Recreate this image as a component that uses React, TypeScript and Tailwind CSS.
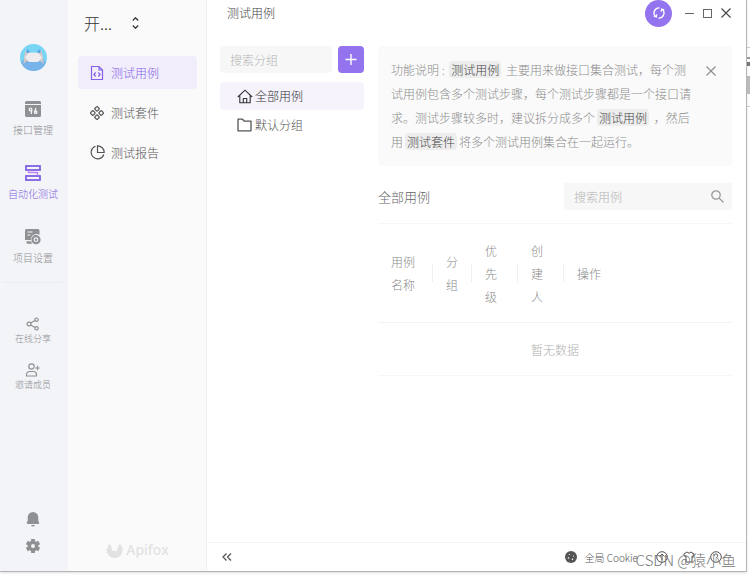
import type { ReactNode } from 'react'

const railItems = [
  { label: '接口管理', icon: <ApiIcon /> },
  { label: '自动化测试', icon: <AutomationIcon />, active: true },
  { label: '项目设置', icon: <ProjectSettingsIcon /> },
]

const menuItems = [
  { label: '测试用例', icon: <CaseIcon />, active: true },
  { label: '测试套件', icon: <SuiteIcon /> },
  { label: '测试报告', icon: <ReportIcon /> },
]

const columns = [
  { label: '用例名称', width: 'w-[55px]' },
  { label: '分组', width: 'w-[39px]' },
  { label: '优先级', width: 'w-[46px]' },
  { label: '创建人', width: 'w-[46px]' },
  { label: '操作', width: '' },
]

function ApiIcon() {
  return (
    <svg width="16" height="16" viewBox="0 0 16 16" fill="none">
      <path d="M1.5 0h13A1.5 1.5 0 0 1 16 1.5V3H0V1.5A1.5 1.5 0 0 1 1.5 0Z" fill="currentColor" />
      <path d="M0 4h16v10.500a1.500 1.500 0 0 1-1.500 1.500h-13A1.500 1.500 0 0 1 0 14.500Z" fill="currentColor" />
      <g stroke="#f3f4f6" strokeWidth="1.300">
        <circle cx="5.500" cy="8.500" r="1.300" />
        <path d="M6.800 8.500 6.300 13M10.800 6.800 9.700 11.500" />
        <circle cx="10.700" cy="11.200" r="1.200" />
      </g>
    </svg>
  )
}

function AutomationIcon() {
  return (
    <svg width="16" height="16" viewBox="0 0 16 16" fill="none" stroke="currentColor">
      <rect x="1" y="1" width="14" height="4" strokeWidth="1.800" />
      <rect x="1" y="11" width="14" height="4" strokeWidth="1.800" />
      <path d="M3.500 5.500v2h9v3" strokeWidth="1.400" stroke="#c084f5" />
    </svg>
  )
}

function ProjectSettingsIcon() {
  return (
    <svg width="16" height="16" viewBox="0 0 16 16" fill="none">
      <path d="M1.500 0h11.500A1.500 1.500 0 0 1 14.500 1.500V6A5.500 5.500 0 0 0 6 11H0V1.500A1.500 1.500 0 0 1 1.500 0Z" fill="currentColor" />
      <path d="M1.500 12.200H6q.4 1.500 1.300 2.600H3A1.500 1.500 0 0 1 1.500 13.300Z" fill="currentColor" />
      <path d="M2.500 3h5M2.500 6h3" stroke="#f3f4f6" strokeWidth="1.200" />
      <circle cx="11" cy="10.700" r="3.500" stroke="currentColor" strokeWidth="2.200" />
      <circle cx="11" cy="10.700" r="1.200" fill="currentColor" />
    </svg>
  )
}

function CaseIcon() {
  return (
    <svg width="14" height="16" viewBox="0 0 14 16" fill="none" stroke="currentColor" strokeWidth="1.200">
      <path d="M1.500 1.500h7.500l3.500 3.500v9.500h-11ZM9 1.500V5h3.500" />
      <path d="M5.700 7.500 3.900 9.500l1.800 2M8.300 7.500l1.800 2-1.800 2" />
    </svg>
  )
}

function SuiteIcon() {
  return (
    <svg width="14" height="14" viewBox="0 0 14 14" fill="none" stroke="currentColor" strokeWidth="1.200">
      <rect x="5.200" y="1" width="3.600" height="3.600" rx=".8" transform="rotate(45 7 2.800)" />
      <rect x="5.200" y="9.400" width="3.600" height="3.600" rx=".8" transform="rotate(45 7 11.200)" />
      <rect x="1" y="5.200" width="3.600" height="3.600" rx=".8" transform="rotate(45 2.800 7)" />
      <rect x="9.400" y="5.200" width="3.600" height="3.600" rx=".8" transform="rotate(45 11.200 7)" />
    </svg>
  )
}

function ReportIcon() {
  return (
    <svg width="15" height="15" viewBox="0 0 15 15" fill="none" stroke="currentColor" strokeWidth="1.200">
      <path d="M5.500 1.200A6.500 6.500 0 1 0 13.800 9.500" />
      <path d="M7.500.8v6.700h6.700A6.700 6.700 0 0 0 7.500.8Z" />
    </svg>
  )
}

function Avatar() {
  return (
    <svg width="27" height="27" viewBox="0 0 27 27" aria-label="avatar">
      <circle cx="13.500" cy="13.500" r="13.500" fill="#78d5f3" />
      <path d="M1 18.500 6 13h15l5 5.500A13.500 13.500 0 0 1 1 18.500Z" fill="#78b3ea" />
      <path d="M7 5 11 8.500l-5 2ZM20 5 16 8.500l5 2Z" fill="#5aa5e3" />
      <path d="M5.500 5.500 6.500 9h14l1-3.500 1.200 7 .8 7.500-3-3H6.500l-3 3 .8-7.500Z" fill="#d3c9c8" />
      <path d="M9 8.500h9l4 5-4 4.500H9l-4-4.500Z" fill="#eeecef" />
    </svg>
  )
}

function ShareIcon() {
  return (
    <svg width="14" height="14" viewBox="0 0 14 14" fill="none" stroke="currentColor" strokeWidth="1.200">
      <circle cx="3" cy="7" r="1.900" />
      <circle cx="10.500" cy="2.700" r="1.700" />
      <circle cx="10.500" cy="11.300" r="1.700" />
      <path d="M4.600 6 9 3.500M4.600 8 9 10.500" />
    </svg>
  )
}

function InviteIcon() {
  return (
    <svg width="16" height="14" viewBox="0 0 16 14" fill="none" stroke="currentColor" strokeWidth="1.200">
      <circle cx="6.500" cy="3.500" r="2.700" />
      <path d="M1.500 13v-1.500a3 3 0 0 1 3-3h4a3 3 0 0 1 3 3V13ZM12.500 2.800v4.400M10.300 5h4.400" />
    </svg>
  )
}

function BellIcon() {
  return (
    <svg width="14" height="15" viewBox="0 0 14 15" fill="currentColor">
      <path d="M7 0a5.300 5.300 0 0 1 5.300 5.300V8.500l.9 2.300q.2 1.200-1 1.200H1.800q-1.200 0-1-1.200l.9-2.300V5.300A5.300 5.300 0 0 1 7 0ZM5 13h4q-.6 1.600-2 1.600T5 13Z" />
    </svg>
  )
}

function GearIcon() {
  return (
    <svg width="14" height="14" viewBox="0 0 14 14" fill="none" stroke="currentColor">
      <circle cx="7" cy="7" r="3.700" strokeWidth="3.400" />
      <path d="M7 0v3M7 11v3M.9 3.500 3.500 5M10.500 9l2.600 1.500M.9 10.500 3.500 9M10.500 5l2.600-1.500" strokeWidth="3.800" />
    </svg>
  )
}

function ApifoxLogo() {
  return (
    <svg width="17" height="15" viewBox="0 0 17 15" fill="currentColor">
      <path d="M4 .8 5.600 4.500Q5 8.300 8.600 8.300q3.400 0 3-3.800L13.800.8Q16.700 3 16.600 7.200A8 7.600 0 0 1 8.700 15Q4 15 2.500 11.500L.3 9.500 1.300 8 0 6.500l1.500-1Q2 2 4 .8Z" />
    </svg>
  )
}

function HomeIcon() {
  return (
    <svg width="16" height="15" viewBox="0 0 16 15" fill="none" stroke="currentColor" strokeWidth="1.100">
      <path d="M.8 8 8 1.200 15.200 8M2.800 6.500v7.300h10.400V6.500M6.300 13.800V9.500h3.400v4.300" />
    </svg>
  )
}

function FolderIcon() {
  return (
    <svg width="15" height="14" viewBox="0 0 15 14" fill="none" stroke="currentColor" strokeWidth="1.300">
      <path d="M1 1.200h4.500l1.800 2H14v9.600H1Z" strokeLinejoin="round" />
    </svg>
  )
}

function SyncIcon() {
  return (
    <svg width="12" height="12" viewBox="0 0 12 12" fill="none" stroke="currentColor" strokeWidth="1.300">
      <path d="M6.500 1A5 5 0 0 0 2.500 9.500M3.800 7.300 3.300 10 .8 9.200M5.500 11A5 5 0 0 0 9.500 2.500M8.200 4.700 8.700 2l2.500.8" />
    </svg>
  )
}

function CrossIcon() {
  return (
    <svg width="10" height="10" viewBox="0 0 10 10" stroke="currentColor" strokeWidth="1.100">
      <path d="M.5.5l9 9M9.500.5l-9 9" />
    </svg>
  )
}

function SearchIcon() {
  return (
    <svg width="13" height="13" viewBox="0 0 13 13" fill="none" stroke="currentColor" strokeWidth="1.300">
      <circle cx="5" cy="5" r="4.200" />
      <path d="m8 8 4.500 4.500" />
    </svg>
  )
}

function CookieIcon() {
  return (
    <svg width="12" height="12" viewBox="0 0 12 12" fill="#555">
      <circle cx="6" cy="6" r="6" />
      <g fill="#fff">
        <circle cx="4.500" cy="3.500" r=".6" />
        <circle cx="8.500" cy="5" r=".6" />
        <circle cx="3.500" cy="7" r=".8" />
        <circle cx="7.500" cy="8.300" r=".8" />
      </g>
    </svg>
  )
}

function Tag({ children }: { children: ReactNode }) {
  return <span className="mx-0.5 rounded-sm bg-[#ededed] px-0.5 text-[#444]">{children}</span>
}

function Rail() {
  return (
    <nav className="flex w-[68px] shrink-0 flex-col items-center bg-[#f3f4f7] pt-11 pr-0.5 pb-[18px] text-[#8f9093]">
      <Avatar />
      <div className="mt-[30px] flex flex-col gap-[27px]">
        {railItems.map((item) => (
          <button
            key={item.label}
            className={`flex flex-col items-center gap-[5px] text-[10px] leading-4 ${item.active ? 'text-[#7f62e2]' : ''}`}
          >
            {item.icon}
            {item.label}
          </button>
        ))}
      </div>
      <hr className="mt-4 w-[60px] border-[#ececef]" />
      <div className="mt-[34px] flex flex-col gap-[17px] text-[9px] leading-[15px]">
        <button className="flex flex-col items-center">
          <ShareIcon />
          在线分享
        </button>
        <button className="flex flex-col items-center">
          <InviteIcon />
          邀请成员
        </button>
      </div>
      <div className="mt-auto flex flex-col items-center gap-3">
        <button aria-label="通知">
          <BellIcon />
        </button>
        <button aria-label="设置">
          <GearIcon />
        </button>
      </div>
    </nav>
  )
}

function Sidebar() {
  return (
    <aside className="flex w-[139px] shrink-0 flex-col border-r border-[#f0f0f0] bg-[#fafafa] pt-3 pr-[9px] pb-3 pl-2.5">
      <button className="flex items-center gap-5 pl-1.5 text-base leading-[22px] text-[#333]">
        开...
        <svg width="7" height="12" viewBox="0 0 7 12" fill="none" stroke="currentColor" strokeWidth="1.300">
          <path d="m.8 3.500 2.700-2.700 2.700 2.700M.8 8.500l2.700 2.700 2.700-2.700" />
        </svg>
      </button>
      <div className="mt-[22px] flex flex-col gap-[7px]">
        {menuItems.map((item) => (
          <button
            key={item.label}
            className={`flex h-[33px] items-center rounded pl-3 text-xs ${item.active ? 'bg-[#f1edfa] text-[#8561ea]' : 'text-[#555]'}`}
          >
            <span className="flex w-[21px]">{item.icon}</span>
            {item.label}
          </button>
        ))}
      </div>
      <div className="mt-auto flex items-center justify-center gap-[3px] font-['Noto_Sans'] text-sm leading-[18px] font-medium text-[#e2e2e2]">
        <ApifoxLogo />
        Apifox
      </div>
    </aside>
  )
}

function TitleBar() {
  return (
    <header className="flex h-[26px] shrink-0 items-center pr-[15px] pl-5 text-[#444]">
      <h1 className="text-xs">测试用例</h1>
      <button aria-label="同步" className="ml-auto flex size-[27px] items-center justify-center rounded-full bg-[#9373ee] text-white">
        <SyncIcon />
      </button>
      <div className="ml-[13px] flex items-center gap-[9px]">
        <button aria-label="最小化" className="h-px w-[9px] bg-[#666]" />
        <button aria-label="最大化" className="size-[9px] border border-[#666]" />
        <button aria-label="关闭">
          <CrossIcon />
        </button>
      </div>
    </header>
  )
}

function Groups() {
  return (
    <section className="w-36 shrink-0 text-xs">
      <div className="flex gap-1.5">
        <input
          aria-label="搜索分组"
          placeholder="搜索分组"
          className="h-[27px] w-0 flex-1 rounded bg-[#f7f7f7] px-2.5 placeholder:text-[#b5b5b5] focus:outline-none"
        />
        <button aria-label="添加分组" className="flex h-[27px] w-[26px] items-center justify-center rounded bg-[#9373ee] text-white">
          <svg width="12" height="11" viewBox="0 0 12 11" stroke="currentColor" strokeWidth="1.400">
            <path d="M6 0v11M.5 5.500h11" />
          </svg>
        </button>
      </div>
      <button className="mt-[9px] flex h-7 w-full items-center gap-0.5 rounded bg-[#f6f3fd] pl-[17px] text-[#333]">
        <HomeIcon />
        全部用例
      </button>
      <button className="mt-px flex h-7 w-full items-center gap-[3px] pl-[17px] text-[#555]">
        <FolderIcon />
        默认分组
      </button>
    </section>
  )
}

function Notice() {
  return (
    <div className="flex items-start justify-between rounded bg-[#fafafa] px-[13px] py-3 text-[#8c8c8c]">
      <p className="w-[302px] text-xs leading-6">
        功能说明 : <Tag>测试用例</Tag> 主要用来做接口集合测试，每个测试用例包含多个测试步骤，每个测试步骤都是一个接口请求。测试步骤较多时，建议拆分成多个<Tag>测试用例</Tag> ，然后用<Tag>测试套件</Tag>将多个测试用例集合在一起运行。
      </p>
      <button aria-label="关闭说明" className="mt-2 mr-[3px]">
        <CrossIcon />
      </button>
    </div>
  )
}

function Cases() {
  return (
    <section className="min-w-0 flex-1">
      <Notice />
      <div className="flex items-center justify-between pt-[17px] pb-[13px]">
        <h2 className="text-[13px] text-[#666]">全部用例</h2>
        <label className="flex h-[27px] w-[168px] items-center bg-[#f7f7f7] pr-2 pl-2.5 text-xs text-[#999]">
          <input
            aria-label="搜索用例"
            placeholder="搜索用例"
            className="w-0 flex-1 placeholder:text-[#b5b5b5] focus:outline-none"
          />
          <SearchIcon />
        </label>
      </div>
      <table className="w-full table-fixed border-y border-[#f6f6f6] text-xs leading-[23px]">
        <thead className="text-[#8c8c8c]">
          <tr className="h-[99px] border-b border-[#f3f3f3]">
            {columns.map((column, i) => (
              <th key={column.label} className={`relative px-[13px] text-left font-light ${column.width}`}>
                {column.label}
                {i < columns.length - 1 && <span className="absolute inset-y-10 right-0 w-px bg-[#f0f0f0]" />}
              </th>
            ))}
          </tr>
        </thead>
        <tbody>
          <tr className="h-[53px] text-center text-[#b0b0b0]">
            <td colSpan={5}>暂无数据</td>
          </tr>
        </tbody>
      </table>
    </section>
  )
}

function Footer() {
  return (
    <footer className="relative flex h-[29px] shrink-0 items-center border-t border-[#f3f3f3] pr-4 pl-[15px] text-[#555]">
      <button aria-label="收起">
        <svg width="10" height="8" viewBox="0 0 10 8" fill="none" stroke="currentColor" strokeWidth="1.300">
          <path d="M4.500.5 1 4l3.500 3.500M9 .5 5.500 4 9 7.500" />
        </svg>
      </button>
      <button className="ml-auto flex items-center gap-[7px] text-[10px]">
        <CookieIcon />
        全局 Cookie
      </button>
      <div className="mr-2 ml-[18px] flex items-center gap-[15px]">
        <button aria-label="上传">
          <svg width="12" height="12" viewBox="0 0 12 12" fill="none" stroke="currentColor">
            <circle cx="6" cy="6" r="5.300" />
            <path d="M6 9V3.300M3.500 5.500 6 3l2.500 2.500" />
          </svg>
        </button>
        <button aria-label="外观">
          <svg width="12" height="12" viewBox="0 0 12 12" fill="none" stroke="currentColor">
            <path d="M4 1 .8 3l1 2.500L3 5v6h6V5l1.200.5 1-2.500L8 1Q6 3.500 4 1Z" />
          </svg>
        </button>
        <button aria-label="帮助">
          <svg width="12" height="12" viewBox="0 0 12 12" fill="none" stroke="currentColor">
            <circle cx="6" cy="6" r="5.300" />
            <path d="M4.300 4.700a1.700 1.700 0 1 1 2.400 1.500Q6 6.500 6 7.500M6 8.500v1" />
          </svg>
        </button>
      </div>
      <span className="absolute right-2.5 bottom-0 text-[15px] leading-[22px] text-[#777]">CSDN @猿小鱼</span>
    </footer>
  )
}

// sliver of the window that lies behind this one
function BackWindow() {
  return (
    <div className="flex w-[3px] flex-col pt-[47px]">
      <div className="h-px bg-[#ccc]" />
      <div className="mt-[9px] h-0.5 bg-[#999]" />
      <div className="mt-[3px] h-1 bg-[#777]" />
      <div className="mt-2.5 h-[18px] bg-[#bbb]" />
      <div className="mt-3 h-px bg-[#ccc]" />
    </div>
  )
}

export default function App() {
  return (
    <div className="flex h-screen bg-white pb-1 font-['Noto_Sans_CJK_SC',sans-serif] font-light">
      <div className="flex min-w-0 flex-1 border-r border-b border-[#b5b5b5] bg-white shadow-sm">
        <Rail />
        <Sidebar />
        <main className="flex min-w-0 flex-1 flex-col">
          <TitleBar />
          <div className="flex flex-1 gap-3.5 pt-5 pr-3.5 pl-[13px]">
            <Groups />
            <Cases />
          </div>
          <Footer />
        </main>
      </div>
      <BackWindow />
    </div>
  )
}
